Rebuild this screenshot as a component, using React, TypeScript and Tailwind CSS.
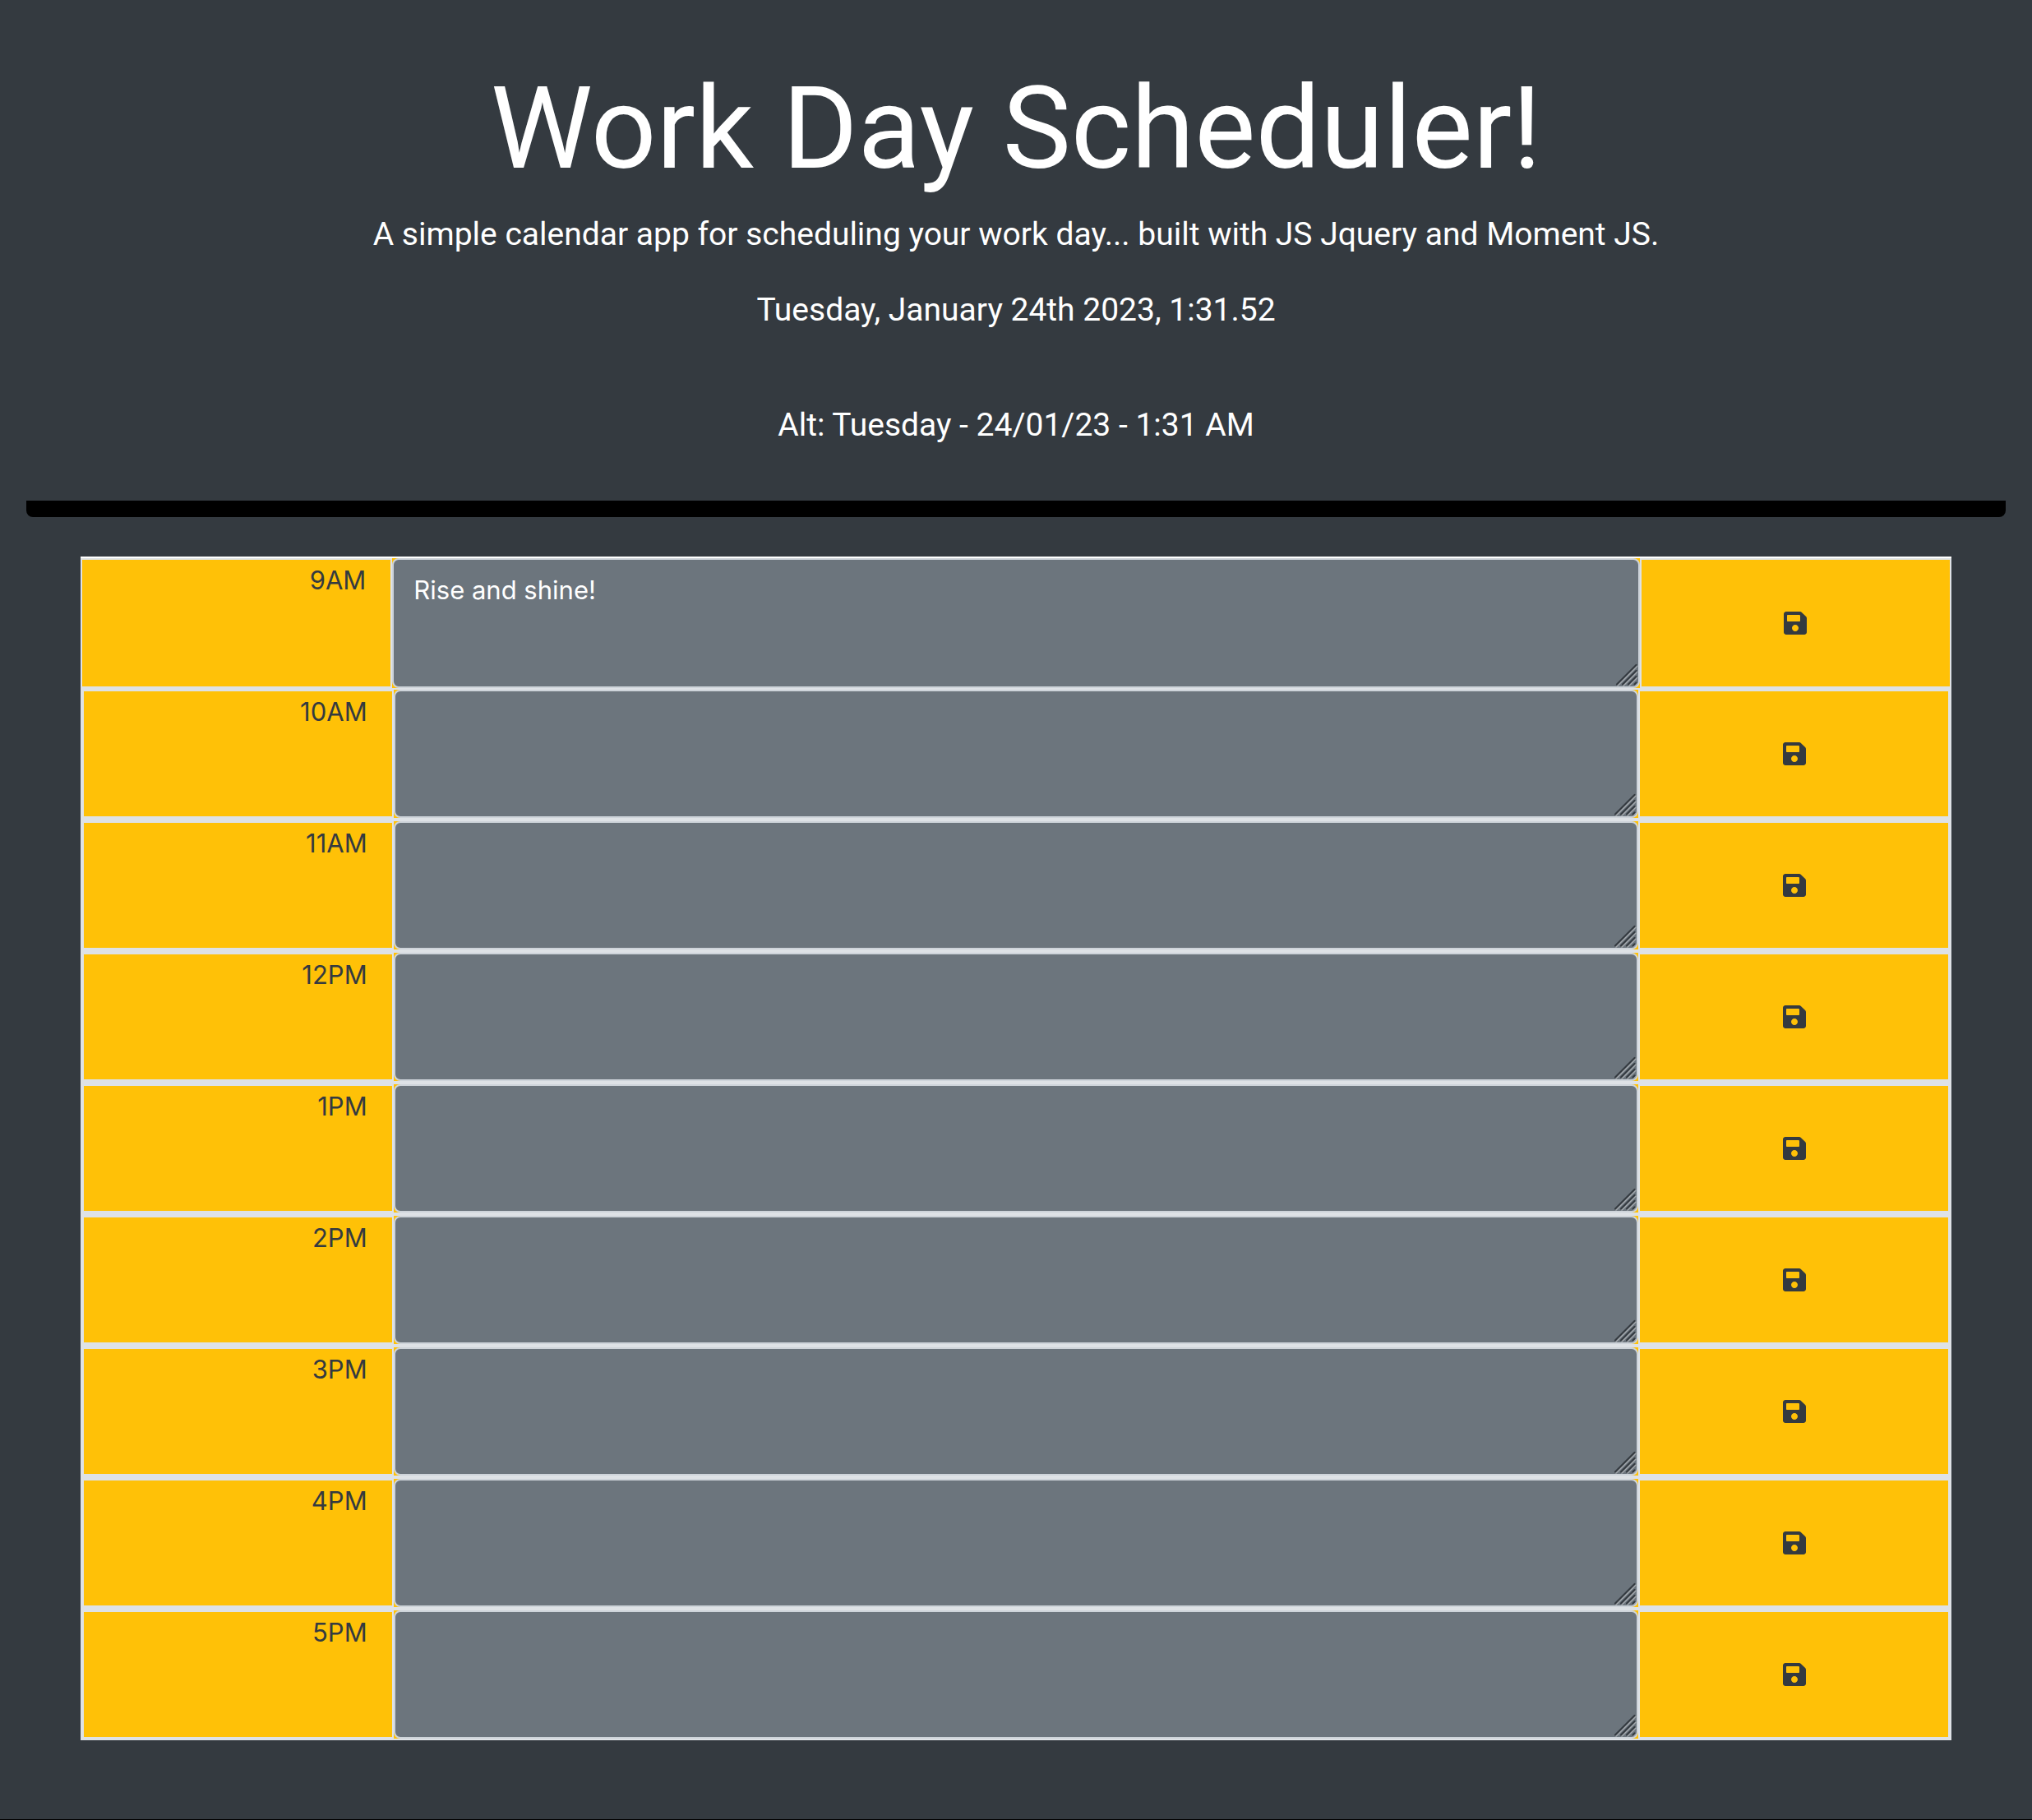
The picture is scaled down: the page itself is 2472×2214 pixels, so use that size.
import { useState } from "react";
import { FaSave } from "react-icons/fa";

const initialTasks = [
  { hour: "9AM", task: "Rise and shine!" },
  { hour: "10AM", task: "" },
  { hour: "11AM", task: "" },
  { hour: "12PM", task: "" },
  { hour: "1PM", task: "" },
  { hour: "2PM", task: "" },
  { hour: "3PM", task: "" },
  { hour: "4PM", task: "" },
  { hour: "5PM", task: "" },
];

function ResizeGrip() {
  const lines = "M2 25.5L25.5 2M9 25.5L25.5 9M16 25.5L25.5 16M23.5 25.5L25.5 23.5";
  return (
    <svg
      className="pointer-events-none absolute right-0.5 bottom-0.5 size-7"
      viewBox="0 0 28 28"
      fill="none"
      strokeWidth="2"
      strokeLinecap="round"
      aria-hidden="true"
    >
      <path d={lines} stroke="#a3a8ad" transform="translate(1 1.2)" />
      <path d={lines} stroke="#343a40" strokeWidth="2.2" />
    </svg>
  );
}

type TimeBlockProps = { hour: string; task: string; first: boolean };

function TimeBlock({ hour, task, first }: TimeBlockProps) {
  const [text, setText] = useState(task);
  const id = `task-${hour}`;
  return (
    <div
      className={
        first
          ? "grid min-h-40 grid-cols-[2fr_8fr_2fr] border-t-2 border-white bg-[#ffc107]"
          : "grid min-h-40 grid-cols-[2fr_8fr_2fr] border-2 border-[#dee2e6] bg-[#ffc107]"
      }
    >
      <label
        htmlFor={id}
        className="border-2 border-[#dee2e6] pr-[30px] text-right text-[31px] leading-[50px]"
      >
        {hour}
      </label>
      <div className="relative flex">
        <textarea
          id={id}
          value={text}
          onChange={(e) => setText(e.target.value)}
          className="block w-full resize-none rounded-lg border-2 border-[#ced4da] bg-[#6c757d] px-6 py-3 text-[31px] leading-[50px] text-white outline-none"
        />
        <ResizeGrip />
      </div>
      <button
        type="button"
        aria-label={`Save ${hour}`}
        className="flex items-center justify-center border-2 border-[#dee2e6] text-[32px]"
      >
        <FaSave />
      </button>
    </div>
  );
}

export default function App() {
  return (
    <div className="min-h-screen border-b border-black bg-[#343a40] px-8 pb-24 font-['Inter',sans-serif] text-[#343a40]">
      <header className="rounded-b-lg border-b-[20px] border-black pt-16 pb-[62px] text-center font-['Roboto',sans-serif] text-white">
        <h1 className="mb-[7px] text-[140px] leading-[184px] font-normal">Work Day Scheduler!</h1>
        <p className="mb-8 text-[39px] leading-[60px]">
          A simple calendar app for scheduling your work day... built with JS Jquery and Moment JS.
        </p>
        <p className="mb-20 text-[39px] leading-[60px]">Tuesday, January 24th 2023, 1:31.52</p>
        <p className="text-[39px] leading-[60px]">Alt: Tuesday - 24/01/23 - 1:31 AM</p>
      </header>
      <main className="mx-[66px] mt-12">
        {initialTasks.map((t, i) => (
          <TimeBlock key={t.hour} hour={t.hour} task={t.task} first={i === 0} />
        ))}
      </main>
    </div>
  );
}
